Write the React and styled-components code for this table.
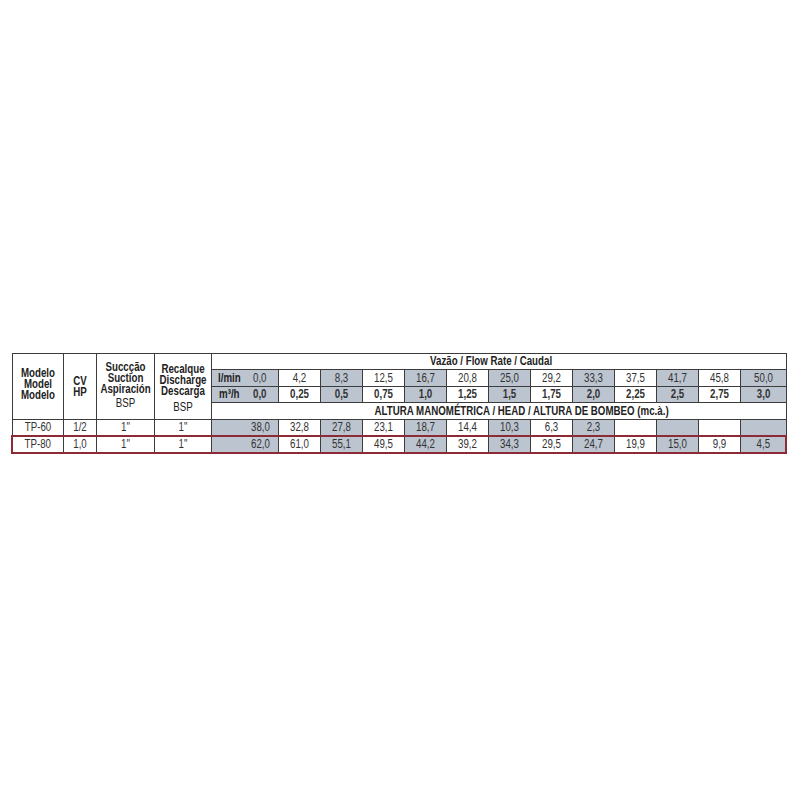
import React from 'react';
import styled, { createGlobalStyle } from 'styled-components';

const Global = createGlobalStyle`
  html, body { margin: 0; padding: 0; background: #ffffff; }
  body {
    font-family: "Liberation Sans", Arial, sans-serif;
  }
`;

const Page = styled.div`
  padding: 353px 0 0 11px;
`;

const Table = styled.table`
  border-collapse: collapse;
  table-layout: fixed;
  width: 774px;
  font-size: 12px;
  color: #333333;
`;

const Row = styled.tr`
  height: ${(p) => p.$h}px;
  ${(p) =>
    p.$red &&
    `
    & > td { border-top: 2px solid #8c2a36; border-bottom: 2px solid #8c2a36; }
    & > td:first-child { border-left: 2px solid #8c2a36; }
    & > td:last-child { border-right: 2px solid #8c2a36; }
  `}
`;

const Cell = styled.td`
  border: 1px solid #3c3c3c;
  padding: ${(p) => p.$pt || 0}px ${(p) => p.$pr || 0}px ${(p) => p.$pb || 0}px
    ${(p) => p.$pl || 0}px;
  text-align: ${(p) => p.$align || 'center'};
  vertical-align: middle;
  font-weight: ${(p) => (p.$bold ? 700 : 400)};
  background: ${(p) => (p.$grey ? '#bcc4cf' : '#ffffff')};
  line-height: 11px;
  white-space: nowrap;
  overflow: hidden;
  ${(p) => p.$joinRight && 'border-right-style: hidden;'}
  ${(p) => p.$joinLeft && 'border-left-style: hidden;'}
`;

const HeadCell = styled(Cell)`
  color: #222222;
`;

/* narrow (Arial Narrow-like) text: Liberation Sans squeezed horizontally */
const Txt = styled.div`
  display: block;
  margin: ${(p) => (p.$left ? '0' : '0 -14px')};
  transform: scaleX(0.81);
  transform-origin: ${(p) => (p.$left ? 'left center' : 'center center')};
  margin-top: ${(p) => p.$gap || 0}px;
`;

const Line = styled(Txt)`
  font-weight: ${(p) => (p.$regular ? 400 : 700)};
`;

const Col = styled.col`
  width: ${(p) => p.$w}px;
`;

const widths = [51, 33, 58, 57, 31, 36, 42, 42, 42, 42, 42, 42, 42, 42, 42, 42, 42, 46];

const lmin = ['4,2', '8,3', '12,5', '16,7', '20,8', '25,0', '29,2', '33,3', '37,5', '41,7', '45,8', '50,0'];
const m3h = ['0,25', '0,5', '0,75', '1,0', '1,25', '1,5', '1,75', '2,0', '2,25', '2,5', '2,75', '3,0'];

const models = [
  {
    name: 'TP-60',
    cv: '1/2',
    values: ['38,0', '32,8', '27,8', '23,1', '18,7', '14,4', '10,3', '6,3', '2,3', '', '', '', ''],
  },
  {
    name: 'TP-80',
    cv: '1,0',
    red: true,
    values: ['62,0', '61,0', '55,1', '49,5', '44,2', '39,2', '34,3', '29,5', '24,7', '19,9', '15,0', '9,9', '4,5'],
  },
];

export default function App() {
  return (
    <>
      <Global />
      <Page>
        <Table>
          <colgroup>
            {widths.map((w, i) => (
              <Col key={i} $w={w} />
            ))}
          </colgroup>
          <tbody>
            <Row $h={16}>
              <HeadCell rowSpan={4} $pb={5}>
                <Line>Modelo</Line>
                <Line>Model</Line>
                <Line>Modelo</Line>
              </HeadCell>
              <HeadCell rowSpan={4}>
                <Line>CV</Line>
                <Line>HP</Line>
              </HeadCell>
              <HeadCell rowSpan={4} $pb={2}>
                <Line>Succção</Line>
                <Line>Suction</Line>
                <Line>Aspiración</Line>
                <Line $regular $gap={3}>BSP</Line>
              </HeadCell>
              <HeadCell rowSpan={4} $pt={3}>
                <Line>Recalque</Line>
                <Line>Discharge</Line>
                <Line>Descarga</Line>
                <Line $regular $gap={5}>BSP</Line>
              </HeadCell>
              <HeadCell colSpan={14} $bold $pr={16}>
                <Txt>Vazão / Flow Rate / Caudal</Txt>
              </HeadCell>
            </Row>
            <Row $h={17}>
              <HeadCell $grey $bold $align="left" $pl={6} $joinRight>
                <Txt $left>l/min</Txt>
              </HeadCell>
              <Cell $grey $joinLeft>
                <Txt>0,0</Txt>
              </Cell>
              {lmin.map((v, i) => (
                <Cell key={i} $grey={i % 2 === 1}>
                  <Txt>{v}</Txt>
                </Cell>
              ))}
            </Row>
            <Row $h={16}>
              <HeadCell $grey $bold $align="left" $pl={7} $joinRight>
                <Txt $left>m³/h</Txt>
              </HeadCell>
              <Cell $grey $bold $joinLeft>
                <Txt>0,0</Txt>
              </Cell>
              {m3h.map((v, i) => (
                <Cell key={i} $grey={i % 2 === 1} $bold>
                  <Txt>{v}</Txt>
                </Cell>
              ))}
            </Row>
            <Row $h={17}>
              <HeadCell colSpan={14} $bold $pl={45}>
                <Txt>ALTURA MANOMÉTRICA / HEAD / ALTURA DE BOMBEO (mc.à.)</Txt>
              </HeadCell>
            </Row>
            {models.map((m) => (
              <Row key={m.name} $h={m.red ? 17 : 16} $red={m.red}>
                <Cell>
                  <Txt>{m.name}</Txt>
                </Cell>
                <Cell>
                  <Txt>{m.cv}</Txt>
                </Cell>
                <Cell>
                  <Txt>1"</Txt>
                </Cell>
                <Cell>
                  <Txt>1"</Txt>
                </Cell>
                <Cell colSpan={2} $grey $pl={31}>
                  <Txt>{m.values[0]}</Txt>
                </Cell>
                {m.values.slice(1).map((v, i) => (
                  <Cell key={i} $grey={i % 2 === 1}>
                    <Txt>{v}</Txt>
                  </Cell>
                ))}
              </Row>
            ))}
          </tbody>
        </Table>
      </Page>
    </>
  );
}
